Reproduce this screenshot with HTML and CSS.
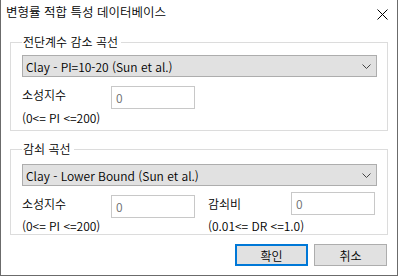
FILE: index.html
```html
<!DOCTYPE html>
<html lang="ko">
<head>
    <meta charset="UTF-8">
    <title>변형률 적합 특성 데이터베이스</title>
    <link rel="stylesheet" href="styles.css">
</head>
<body>
    <div class="dialog">
        <div class="titlebar">
            <span class="title">변형률 적합 특성 데이터베이스</span>
            <svg class="close" width="11" height="11" viewBox="0 0 11 11">
                <path d="M0.5 0.5 L10.5 10.5 M10.5 0.5 L0.5 10.5" stroke="#000" stroke-width="1" fill="none"/>
            </svg>
        </div>

        <fieldset class="group group-first">
            <legend>전단계수 감소 곡선</legend>
            <div class="combo">
                <span>Clay - PI=10-20 (Sun et al.)</span>
                <svg width="9" height="5" viewBox="0 0 9 5"><path d="M0.5 0.5 L4.5 4.5 L8.5 0.5" stroke="#444" fill="none"/></svg>
            </div>
            <div class="fields">
                <label class="lbl">소성지수</label>
                <div class="input">0</div>
            </div>
            <div class="hints">
                <span>(0&lt;= PI &lt;=200)</span>
            </div>
        </fieldset>

        <fieldset class="group group-second">
            <legend>감쇠 곡선</legend>
            <div class="combo">
                <span>Clay - Lower Bound (Sun et al.)</span>
                <svg width="9" height="5" viewBox="0 0 9 5"><path d="M0.5 0.5 L4.5 4.5 L8.5 0.5" stroke="#444" fill="none"/></svg>
            </div>
            <div class="fields">
                <label class="lbl">소성지수</label>
                <div class="input">0</div>
                <label class="lbl lbl-second">감쇠비</label>
                <div class="input input-raised">0</div>
            </div>
            <div class="hints">
                <span>(0&lt;= PI &lt;=200)</span>
                <span>(0.01&lt;= DR &lt;=1.0)</span>
            </div>
        </fieldset>

        <div class="buttons">
            <button class="btn btn-default">확인</button>
            <button class="btn">취소</button>
        </div>
    </div>
</body>
</html>
```

FILE: styles.css
```css
body {
    margin: 0;
    background: #fff;
    font-family: "Noto Sans CJK KR", sans-serif;
    font-weight: 350;
    font-size: 12px;
    color: #000;
}

.dialog {
    width: 396px;
    height: 275px;
    border: 1px solid #6b6b6b;
    border-top: none;
    background: #fff;
}

.titlebar {
    height: 34px;
    display: flex;
    justify-content: space-between;
    padding: 2px 9px 0 5px;
    box-sizing: border-box;
}

.title {
    line-height: 20px;
    font-size: 12.5px;
}

.close {
    margin-top: 7px;
}

.group {
    margin: 0 9px;
    padding: 5px 10px 4px 11px;
    border: 1px solid #dcdcdc;
    min-width: 0;
}

.group-second {
    margin-top: 10px;
    padding-top: 7px;
    padding-bottom: 0;
}

.group legend {
    padding: 0 3px 0 1px;
    line-height: 16px;
}

.combo {
    height: 20px;
    border: 1px solid #adadad;
    background: #e1e1e1;
    display: flex;
    align-items: center;
    justify-content: space-between;
    padding: 0 5px 0 3px;
}

.fields {
    display: grid;
    grid-template-columns: 89px 84px 13px 83px 84px;
    align-items: start;
    margin-top: 9px;
}

.lbl {
    line-height: 16px;
    padding-top: 1px;
}

.fields .lbl-second {
    grid-column: 4;
}

.input {
    height: 21px;
    border: 1px solid #c8c8c8;
    padding-left: 4px;
    line-height: 21px;
    color: #6d6d6d;
}

.input-raised {
    margin-top: -3px;
}

.hints {
    display: grid;
    grid-template-columns: 186px auto;
    line-height: 16px;
    margin-top: 1px;
}

.group-second .hints {
    margin-top: 0;
}

.buttons {
    display: flex;
    justify-content: flex-end;
    gap: 6px;
    padding: 9px 10px 0 0;
}

.btn {
    width: 73px;
    height: 22px;
    font-family: inherit;
    font-weight: inherit;
    font-size: 12px;
    background: #e1e1e1;
    border: 1px solid #adadad;
    padding: 0;
    color: #000;
}

.btn-default {
    border: 2px solid #0078d7;
}
```
